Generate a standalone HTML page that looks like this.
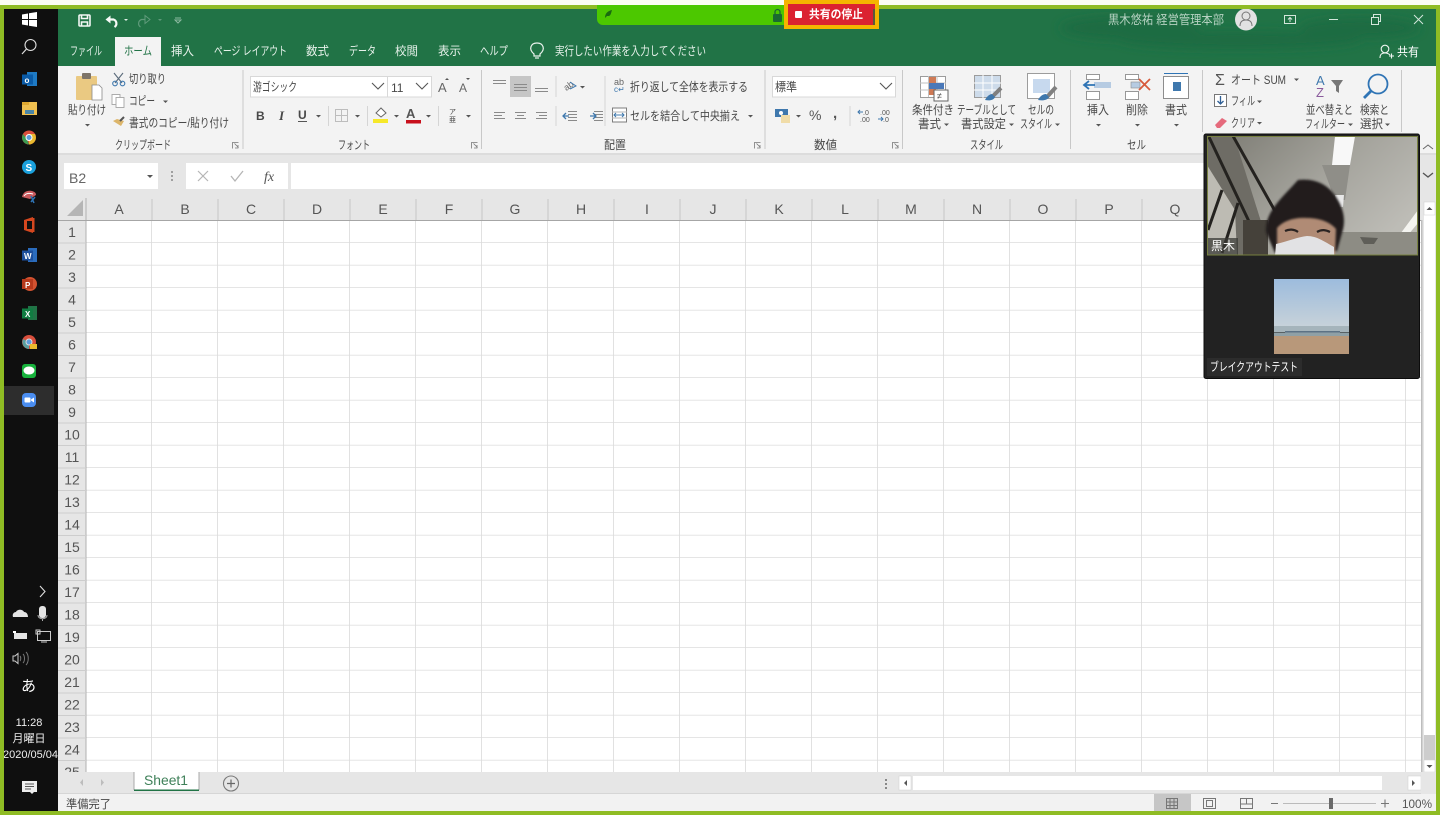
<!DOCTYPE html>
<html lang="ja">
<head>
<meta charset="utf-8">
<title>Excel</title>
<style>
html,body{margin:0;padding:0;width:1440px;height:815px;overflow:hidden;background:#fff}
svg{display:block;filter:blur(.3px)}
text{font-family:"Liberation Sans","Noto Sans CJK JP",sans-serif;fill:#484848;font-size:12px}
.tab{fill:#e6f1ea;font-size:12px}
.w{fill:#fff}
.h{font-size:14px;fill:#555;text-anchor:middle}
.g{font-size:12px;fill:#484848}
.ar{fill:#555}
</style>
</head>
<body>
<svg xmlns="http://www.w3.org/2000/svg" width="1440" height="815" viewBox="0 0 1440 815">
<defs>
<pattern id="grid" x="86" y="220.5" width="66" height="22.5" patternUnits="userSpaceOnUse">
<rect width="66" height="22.5" fill="#fff"/>
<rect x="65.2" width="1.1" height="22.5" fill="#dadada"/>
<rect y="21.8" width="66" height="1.1" fill="#dadada"/>
</pattern>
<filter id="bl" x="-20%" y="-50%" width="140%" height="200%"><feGaussianBlur stdDeviation="5"/></filter>
<filter id="bs" x="-20%" y="-20%" width="140%" height="140%"><feGaussianBlur stdDeviation="1"/></filter>
<linearGradient id="ceil" x1="0" y1="0" x2="1" y2=".6"><stop offset="0" stop-color="#7b7a72"/><stop offset=".55" stop-color="#a4a39c"/><stop offset="1" stop-color="#bdbcb6"/></linearGradient>
<linearGradient id="sky" x1="0" y1="0" x2="0" y2="1"><stop offset="0" stop-color="#9dbcdd"/><stop offset="1" stop-color="#cbd4d9"/></linearGradient>
<clipPath id="vid"><rect x="1207" y="136" width="211" height="119"/></clipPath>
</defs>

<!-- outer frame -->
<rect width="1440" height="815" fill="#8fbc24"/>
<rect width="1440" height="5" fill="#fbfdf3"/>
<rect x="4" y="9" width="54" height="802" fill="#0f0f0f"/>

<!-- title band -->
<rect x="58" y="9" width="1378" height="57" fill="#217346"/>
<g fill="#1f6c42" filter="url(#bl)">
<ellipse cx="1130" cy="28" rx="70" ry="12"/><ellipse cx="1240" cy="40" rx="120" ry="9"/><ellipse cx="1360" cy="28" rx="60" ry="10"/>
</g>

<!-- QAT -->
<g fill="none" stroke="#f2f7f4" stroke-width="1.600">
<rect x="79" y="15" width="11" height="11" rx="1"/>
<path d="M81.500 15v3.500h6V15M81.500 26v-4h6v4"/>
</g>
<path d="M105.500 19.500l5-4v8z" fill="#f6faf7"/>
<path d="M110 19.500h3.500a4.200 4.200 0 0 1 1 7.500" fill="none" stroke="#f6faf7" stroke-width="2.200"/>
<path d="M124 19h4l-2 2z" fill="#dfeee5"/>
<path d="M150 19.500l-5-4v8z" fill="none" stroke="#5f9a7a"/>
<path d="M145 19.500h-3.500a4.200 4.200 0 0 0-1 7.500" fill="none" stroke="#5f9a7a" stroke-width="1.200"/>
<path d="M158 19h4l-2 2z" fill="#5f9a7a"/>
<path d="M175 18h6M175 20l3 3 3-3z" fill="none" stroke="#8cb8a0"/>

<!-- tabs -->
<text class="tab" x="70" y="55" textLength="32" lengthAdjust="spacingAndGlyphs">ファイル</text>
<rect x="115" y="37" width="46" height="29" fill="#f3f3f3"/>
<text x="124" y="55" textLength="28" lengthAdjust="spacingAndGlyphs" style="fill:#217346">ホーム</text>
<text class="tab" x="171" y="55" textLength="23" lengthAdjust="spacingAndGlyphs">挿入</text>
<text class="tab" x="214" y="55" textLength="73" lengthAdjust="spacingAndGlyphs">ページ レイアウト</text>
<text class="tab" x="306" y="55" textLength="23" lengthAdjust="spacingAndGlyphs">数式</text>
<text class="tab" x="349" y="55" textLength="27" lengthAdjust="spacingAndGlyphs">データ</text>
<text class="tab" x="395" y="55" textLength="23" lengthAdjust="spacingAndGlyphs">校閲</text>
<text class="tab" x="438" y="55" textLength="23" lengthAdjust="spacingAndGlyphs">表示</text>
<text class="tab" x="480" y="55" textLength="28" lengthAdjust="spacingAndGlyphs">ヘルプ</text>
<g fill="none" stroke="#e8f2ec" stroke-width="1.200"><path d="M534 54c-6-5-3-11 3-11s9 6 3 11v2h-6z"/><path d="M535 58h4"/></g>
<text class="tab" x="555" y="55" textLength="151" lengthAdjust="spacingAndGlyphs">実行したい作業を入力してください</text>
<g fill="none" stroke="#f0f6f2" stroke-width="1.100"><circle cx="1385" cy="49" r="3.800"/><path d="M1380 58c0-4 2-5 5-5s4 1 5 2M1389 56h5M1391.500 53.500v5"/></g>
<text class="w" x="1397" y="56" textLength="22" lengthAdjust="spacingAndGlyphs">共有</text>

<!-- title right -->
<text x="1108" y="24" textLength="116" lengthAdjust="spacingAndGlyphs" style="fill:#b6d2c2;font-size:12.500px">黒木悠祐 経営管理本部</text>
<circle cx="1246" cy="19.500" r="11" fill="#e2e2e2"/>
<g fill="none" stroke="#777" stroke-width="1"><circle cx="1246" cy="16" r="4"/><path d="M1240 26c0-4 2-6 6-6s6 2 6 6"/></g>
<g fill="none" stroke="#d4e6db" stroke-width="1">
<rect x="1284.500" y="15.500" width="11" height="8"/><path d="M1290 22v-4M1288 19.500l2-2 2 2"/>
<path d="M1329 19.500h9"/>
<rect x="1371.500" y="17.500" width="7" height="7"/><path d="M1373.500 17v-2.500h7v7H1379"/>
<path d="M1414 15l9 9M1423 15l-9 9"/>
</g>

<!-- share bar -->
<path d="M597 5h188v20H603a6 6 0 0 1-6-6z" fill="#4cc800"/>
<path d="M605 18c0-5 3-7 7-8-1 3-1 5-3 6l-2 0z" fill="#1a6a10"/>
<rect x="773" y="14" width="9" height="8" rx="1" fill="#1a6a30"/>
<path d="M775 14v-2a2.500 2.500 0 0 1 5 0v2" fill="none" stroke="#1a6a30" stroke-width="1.300"/>
<rect x="784" y="0" width="95" height="29" fill="#f5b400"/>
<rect x="788" y="4" width="87" height="21" fill="#db2230"/>
<rect x="873" y="9" width="2" height="16" fill="#5b5b3a"/>
<rect x="795" y="11" width="7" height="7" rx="1" fill="#fff"/>
<text class="w" x="809" y="18" textLength="54" lengthAdjust="spacingAndGlyphs" style="font-weight:700;font-size:11.500px">共有の停止</text>

<!-- ribbon -->
<rect x="58" y="66" width="1378" height="87" fill="#f3f3f3"/>
<g fill="#c8c8c8">
<rect x="242.500" y="70" width="1" height="79"/><rect x="481" y="70" width="1" height="79"/><rect x="764.500" y="70" width="1" height="79"/><rect x="902" y="70" width="1" height="79"/><rect x="1070" y="70" width="1" height="79"/><rect x="1202" y="70" width="1" height="62"/><rect x="1401" y="70" width="1" height="62"/>
</g>

<!-- clipboard -->
<rect x="76" y="76" width="21" height="24" rx="1" fill="#eac982"/>
<rect x="82" y="73" width="9" height="6" rx="1" fill="#7d7468"/>
<path d="M92 85h7l3 3v12H92z" fill="#fff" stroke="#8a8a8a" stroke-width=".8"/>
<text x="68" y="114" textLength="38" lengthAdjust="spacingAndGlyphs">貼り付け</text>
<path d="M85 124h5l-2.500 2.500z" class="ar"/>
<g fill="none" stroke="#5b6b7b" stroke-width="1.100"><path d="M114 73l8 10M123 73l-8 10"/><circle cx="115" cy="83.500" r="2.300" stroke="#3f78ad"/><circle cx="122.500" cy="83.500" r="2.300" stroke="#3f78ad"/></g>
<text x="129" y="83" textLength="37" lengthAdjust="spacingAndGlyphs">切り取り</text>
<g fill="#fff" stroke="#a5a5a5" stroke-width=".9"><rect x="112" y="94.500" width="8" height="10"/><rect x="116" y="97.500" width="8" height="10"/></g>
<text x="129" y="105" textLength="26" lengthAdjust="spacingAndGlyphs">コピー</text>
<path d="M163 100.500h5l-2.500 2.500z" class="ar"/>
<path d="M113 121l8 5 3-5-7-2z" fill="#dcb56a"/><path d="M120 121l4-4" stroke="#555" stroke-width="2"/>
<text x="129" y="127" textLength="100" lengthAdjust="spacingAndGlyphs">書式のコピー/貼り付け</text>
<text class="g" x="115" y="149" textLength="56" lengthAdjust="spacingAndGlyphs">クリップボード</text>
<g fill="none" stroke="#777" stroke-width=".8"><path d="M232.500 148.500v-6h6M234.500 143.500l4 4M238 145v3h-3"/><path d="M471.500 148.500v-6h6M473.500 143.500l4 4M477 145v3h-3"/><path d="M754.500 148.500v-6h6M756.500 143.500l4 4M760 145v3h-3"/><path d="M892.500 148.500v-6h6M894.500 143.500l4 4M898 145v3h-3"/></g>

<!-- font -->
<rect x="250.500" y="76.500" width="137" height="20.500" fill="#fff" stroke="#d8d8d8"/>
<rect x="387.500" y="76.500" width="44" height="20.500" fill="#fff" stroke="#d8d8d8"/>
<text x="253" y="91" textLength="44" lengthAdjust="spacingAndGlyphs">游ゴシック</text>
<text x="391" y="92" style="font-size:12px">11</text>
<rect x="772.500" y="76.500" width="123" height="20.500" fill="#fff" stroke="#d8d8d8"/>
<g fill="none" stroke="#555" stroke-width="1.100"><path d="M372 83l6 6 6-6M416 83l6 6 6-6M880 83l6 6 6-6"/></g>
<text x="438" y="92" style="font-size:13px;fill:#666">A</text><text x="459" y="92" style="font-size:12px;fill:#666">A</text>
<path d="M445 80l2-2 2 2z" fill="#555"/><path d="M466 78h4l-2 2z" fill="#555"/>
<text x="256" y="120" style="font-weight:700;font-size:12px">B</text>
<text x="279" y="120" style="font-style:italic;font-weight:700;font-size:13px;font-family:'Liberation Serif',serif">I</text>
<text x="298" y="119" style="font-weight:700;font-size:12px">U</text><rect x="298" y="121" width="9" height="1" fill="#555"/>
<g class="ar"><path d="M316 115h5l-2.500 2.500zM355 115h5l-2.500 2.500zM394 115h5l-2.500 2.500zM426 115h5l-2.500 2.500zM466 115h5l-2.500 2.500zM580 86h5l-2.500 2.500zM748 115h5l-2.500 2.500zM796 115h5l-2.500 2.500z"/></g>
<rect x="328" y="106" width="1" height="20" fill="#d5d5d5"/><rect x="367" y="106" width="1" height="20" fill="#d5d5d5"/><rect x="438" y="106" width="1" height="20" fill="#d5d5d5"/>
<g fill="none" stroke="#bdbdbd"><rect x="335.500" y="109.500" width="12" height="12"/><path d="M341.500 109v13M335 115.500h13"/></g>
<path d="M376 113l5-5 5 5-5 4z" fill="#fff" stroke="#666"/><rect x="373" y="119" width="15" height="4" fill="#f6e829"/>
<text x="406" y="118" style="font-size:13px;font-weight:700;fill:#555">A</text><rect x="406" y="120" width="15" height="3.500" fill="#c8101c"/>
<text x="449" y="114" style="font-size:7px">ア</text><text x="449" y="122" style="font-size:7px">亜</text>
<text class="g" x="338" y="149" textLength="32" lengthAdjust="spacingAndGlyphs">フォント</text>

<!-- alignment -->
<rect x="510" y="76" width="21" height="21" fill="#c6c6c6"/>
<g stroke="#8a8a8a" stroke-width="1" fill="none">
<path d="M493 80.500h13M493 83.500h13M514 84.500h13M514 87.500h13M514 90.500h13M535 88.500h13M535 91.500h13"/>
<path d="M494 112.500h11M494 115.500h8M494 118.500h11M515 112.500h11M517 115.500h7M515 118.500h11M536 112.500h11M539 115.500h8M536 118.500h11"/>
<path d="M568 111.500h9M568 114.500h9M568 117.500h9M568 120.500h9M594 111.500h9M594 114.500h9M594 117.500h9M594 120.500h9"/>
</g>
<path d="M563 116h6M566 113l-3 3 3 3" fill="none" stroke="#3f78ad" stroke-width="1.300"/><path d="M590 116h6M593 113l3 3-3 3" fill="none" stroke="#3f78ad" stroke-width="1.300"/>
<text x="563" y="89" style="font-size:9px;fill:#666" transform="rotate(-35 568 85)">ab</text><path d="M570 82l6 4-6 3" fill="none" stroke="#3f78ad"/>
<rect x="555.500" y="76" width="1" height="21" fill="#d5d5d5"/><rect x="555.500" y="106" width="1" height="20" fill="#d5d5d5"/><rect x="604.500" y="76" width="1" height="50" fill="#d5d5d5"/>
<text x="614" y="85" style="font-size:9px;fill:#666">ab</text><text x="614" y="92" style="font-size:8px;fill:#3f78ad">c↵</text>
<text x="630" y="91" textLength="118" lengthAdjust="spacingAndGlyphs">折り返して全体を表示する</text>
<rect x="612.500" y="108" width="14" height="14" fill="#fff" stroke="#7d7d7d"/><path d="M612 112h15M612 118h15" stroke="#b5b5b5"/><path d="M614 115h10M616 113l-2 2 2 2M622 113l2 2-2 2" fill="none" stroke="#3f78ad"/>
<text x="630" y="120" textLength="110" lengthAdjust="spacingAndGlyphs">セルを結合して中央揃え</text>
<text class="g" x="604" y="149" textLength="22" lengthAdjust="spacingAndGlyphs">配置</text>

<!-- number -->
<text x="775" y="91" textLength="22" lengthAdjust="spacingAndGlyphs">標準</text>
<rect x="775" y="109" width="13" height="8" fill="#3f78ad"/><circle cx="781" cy="113" r="2" fill="#fff"/><rect x="781" y="115" width="9" height="8" fill="#f0dca8"/>
<text x="809" y="120" style="font-size:14px;fill:#555">%</text>
<text x="833" y="118" style="font-size:15px;font-weight:700;fill:#555">,</text>
<rect x="849.500" y="106" width="1" height="20" fill="#d5d5d5"/>
<text x="863" y="115" style="font-size:7px;fill:#555">.0</text><text x="860" y="122" style="font-size:7px;fill:#555">.00</text>
<text x="880" y="115" style="font-size:7px;fill:#555">.00</text><text x="883" y="122" style="font-size:7px;fill:#555">.0</text>
<path d="M858 112h5M860 110l-2 2 2 2M878 119h5M881 117l2 2-2 2" fill="none" stroke="#3f78ad"/>
<text class="g" x="814" y="149" textLength="23" lengthAdjust="spacingAndGlyphs">数値</text>

<!-- styles -->
<g>
<rect x="920.500" y="76.500" width="25" height="21" fill="#fff" stroke="#9c9c9c"/>
<path d="M920 83h26M920 90h26M928.500 76v21M937 76v21" stroke="#c2c2c2"/>
<rect x="929" y="77" width="7" height="6" fill="#cf7a55"/><rect x="929" y="83" width="15" height="6" fill="#4a78b8"/><rect x="929" y="89" width="7" height="6" fill="#cf7a55"/>
<rect x="934" y="90" width="14" height="11" fill="#fff" stroke="#666"/><text x="937" y="99" style="font-size:9px">≠</text>
<text x="912" y="114" textLength="42" lengthAdjust="spacingAndGlyphs">条件付き</text>
<text x="918" y="128" textLength="23" lengthAdjust="spacingAndGlyphs">書式</text><path d="M944 123.500h5l-2.500 2.500z" class="ar"/>

<rect x="974.500" y="75.500" width="26" height="22" fill="#cddbea" stroke="#9c9c9c"/>
<path d="M974 83h27M974 90h27M983 75v23M992 75v23" stroke="#fff"/>
<path d="M1001 88l-9 9" stroke="#808080" stroke-width="4"/><path d="M985 100c2-4 5-6 7-6l3 3c-1 3-5 4-10 3z" fill="#3f78ad"/>
<text x="957" y="114" textLength="59" lengthAdjust="spacingAndGlyphs">テーブルとして</text>
<text x="961" y="128" textLength="45" lengthAdjust="spacingAndGlyphs">書式設定</text><path d="M1009 123.500h5l-2.500 2.500z" class="ar"/>

<rect x="1027.500" y="73.500" width="27" height="25" fill="#fff" stroke="#9c9c9c"/>
<rect x="1033" y="79" width="17" height="14" fill="#c7d9ee"/>
<path d="M1056 87l-9 10" stroke="#808080" stroke-width="4"/><path d="M1038 100c2-4 5-6 8-6l3 3c-1 3-6 4-11 3z" fill="#3f78ad"/>
<text x="1028" y="114" textLength="26" lengthAdjust="spacingAndGlyphs">セルの</text>
<text x="1020" y="128" textLength="32" lengthAdjust="spacingAndGlyphs">スタイル</text><path d="M1055 123.500h5l-2.500 2.500z" class="ar"/>
<text class="g" x="970" y="149" textLength="33" lengthAdjust="spacingAndGlyphs">スタイル</text>
</g>

<!-- cells -->
<g fill="#fff" stroke="#8d8d8d" stroke-width=".9">
<rect x="1086.500" y="74.500" width="13" height="5"/><rect x="1086.500" y="91.500" width="13" height="8"/>
<rect x="1125.500" y="74.500" width="13" height="5"/><rect x="1125.500" y="91.500" width="13" height="8"/>
</g>
<rect x="1094" y="82" width="17" height="6" fill="#b6cbe2"/><path d="M1084 85h11M1089 81l-5 4 5 4" fill="none" stroke="#2f74b5" stroke-width="1.800"/>
<rect x="1131" y="82" width="9" height="6" fill="#b6cbe2" stroke="#8d8d8d" stroke-width=".6"/><path d="M1139 79l11 11M1150 79l-11 11" stroke="#d75a3c" stroke-width="1.800"/>
<rect x="1163.500" y="76.500" width="25" height="22" fill="#fff" stroke="#8d8d8d"/><rect x="1173" y="82" width="8" height="9" fill="#3f78ad"/><path d="M1164 73.500h24" stroke="#2f74b5"/>
<text x="1087" y="114" textLength="22" lengthAdjust="spacingAndGlyphs">挿入</text><path d="M1096 124h5l-2.500 2.500z" class="ar"/>
<text x="1126" y="114" textLength="22" lengthAdjust="spacingAndGlyphs">削除</text><path d="M1135 124h5l-2.500 2.500z" class="ar"/>
<text x="1165" y="114" textLength="22" lengthAdjust="spacingAndGlyphs">書式</text><path d="M1174 124h5l-2.500 2.500z" class="ar"/>
<text class="g" x="1127" y="149" textLength="19" lengthAdjust="spacingAndGlyphs">セル</text>

<!-- editing -->
<text x="1215" y="85" style="font-size:16px;fill:#555">Σ</text>
<text x="1231" y="84" textLength="55" lengthAdjust="spacingAndGlyphs">オート SUM</text>
<path d="M1294 78.500h5l-2.500 2.500zM1257 100.500h5l-2.500 2.500zM1257 122h5l-2.500 2.500zM1348 123.500h5l-2.500 2.500zM1385 123.500h5l-2.500 2.500z" class="ar"/>
<rect x="1214.500" y="94.500" width="12" height="12" fill="#fff" stroke="#777"/><path d="M1220.500 96v8M1217.500 101l3 3 3-3" fill="none" stroke="#2f5f95" stroke-width="1.300"/>
<text x="1231" y="105" textLength="24" lengthAdjust="spacingAndGlyphs">フィル</text>
<path d="M1215 125l7-7 5 3-7 7h-3z" fill="#e56a7c"/>
<text x="1231" y="127" textLength="24" lengthAdjust="spacingAndGlyphs">クリア</text>
<text x="1316" y="85" style="font-size:13px;fill:#3f78ad">A</text><text x="1316" y="97" style="font-size:13px;fill:#8a5a9c">Z</text>
<path d="M1331 80h12l-4 6v7l-3-2v-5z" fill="#777"/>
<circle cx="1378" cy="84" r="9.500" fill="none" stroke="#2f74b5" stroke-width="1.800"/><path d="M1371 91l-7 7" stroke="#2f74b5" stroke-width="2.800"/>
<text x="1306" y="114" textLength="47" lengthAdjust="spacingAndGlyphs">並べ替えと</text>
<text x="1305" y="128" textLength="40" lengthAdjust="spacingAndGlyphs">フィルター</text>
<text x="1360" y="114" textLength="29" lengthAdjust="spacingAndGlyphs">検索と</text>
<text x="1360" y="128" textLength="23" lengthAdjust="spacingAndGlyphs">選択</text>
<path d="M1423 149l5-4 5 4" fill="none" stroke="#666"/>

<!-- formula band -->
<rect x="58" y="153" width="1378" height="45" fill="#e6e6e6"/>
<rect x="58" y="153" width="1378" height="2" fill="#dcdcdc"/>
<rect x="64" y="163" width="94" height="26" fill="#fff"/>
<text x="69" y="183" style="font-size:14px;fill:#666">B2</text>
<path d="M147 175h6l-3 3z" class="ar"/>
<g fill="#a0a0a0"><rect x="171" y="171" width="2" height="2"/><rect x="171" y="175" width="2" height="2"/><rect x="171" y="179" width="2" height="2"/></g>
<rect x="186" y="163" width="102" height="26" fill="#fff"/>
<path d="M198 171l10 10M208 171l-10 10" stroke="#b5b5b5" stroke-width="1.200"/>
<path d="M231 176l4 5 8-10" fill="none" stroke="#b5b5b5" stroke-width="1.300"/>
<text x="264" y="181" style="font-family:'Liberation Serif',serif;font-style:italic;font-size:14px;fill:#555">fx</text>
<rect x="291" y="163" width="1129" height="26" fill="#fff"/>
<path d="M1423 173l5 4 5-4" fill="none" stroke="#555" stroke-width="1.400"/>

<!-- grid -->
<rect x="86" y="220" width="1335" height="552" fill="url(#grid)"/>
<rect x="1421" y="198" width="15" height="596" fill="#e6e6e6"/>
<rect x="58" y="198" width="28" height="574" fill="#e6e6e6"/>
<rect x="86" y="198" width="1335" height="22" fill="#e6e6e6"/>
<path d="M67 216h16v-16z" fill="#b5b5b5"/>
<rect x="85.500" y="198" width="1" height="574" fill="#b0b0b0"/>
<rect x="58" y="220" width="1363" height="1" fill="#a6a6a6"/>
<path d="M152 199v21M218 199v21M284 199v21M350 199v21M416 199v21M482 199v21M548 199v21M614 199v21M680 199v21M746 199v21M812 199v21M878 199v21M944 199v21M1010 199v21M1076 199v21M1142 199v21M1208 199v21M1274 199v21M1340 199v21M1406 199v21" stroke="#c6c6c6"/>
<path d="M58 243h28M58 265.500h28M58 288h28M58 310.500h28M58 333h28M58 355.500h28M58 378h28M58 400.500h28M58 423h28M58 445.500h28M58 468h28M58 490.500h28M58 513h28M58 535.500h28M58 558h28M58 580.500h28M58 603h28M58 625.500h28M58 648h28M58 670.500h28M58 693h28M58 715.500h28M58 738h28M58 760.500h28" stroke="#cdcdcd"/>
<g>
<text class="h" x="119" y="214">A</text><text class="h" x="185" y="214">B</text><text class="h" x="251" y="214">C</text><text class="h" x="317" y="214">D</text><text class="h" x="383" y="214">E</text><text class="h" x="449" y="214">F</text><text class="h" x="515" y="214">G</text><text class="h" x="581" y="214">H</text><text class="h" x="647" y="214">I</text><text class="h" x="713" y="214">J</text><text class="h" x="779" y="214">K</text><text class="h" x="845" y="214">L</text><text class="h" x="911" y="214">M</text><text class="h" x="977" y="214">N</text><text class="h" x="1043" y="214">O</text><text class="h" x="1109" y="214">P</text><text class="h" x="1175" y="214">Q</text>
</g>
<g>
<text class="h" x="72" y="237">1</text><text class="h" x="72" y="259.500">2</text><text class="h" x="72" y="282">3</text><text class="h" x="72" y="304.500">4</text><text class="h" x="72" y="327">5</text><text class="h" x="72" y="349.500">6</text><text class="h" x="72" y="372">7</text><text class="h" x="72" y="394.500">8</text><text class="h" x="72" y="417">9</text><text class="h" x="72" y="439.500">10</text><text class="h" x="72" y="462">11</text><text class="h" x="72" y="484.500">12</text><text class="h" x="72" y="507">13</text><text class="h" x="72" y="529.500">14</text><text class="h" x="72" y="552">15</text><text class="h" x="72" y="574.500">16</text><text class="h" x="72" y="597">17</text><text class="h" x="72" y="619.500">18</text><text class="h" x="72" y="642">19</text><text class="h" x="72" y="664.500">20</text><text class="h" x="72" y="687">21</text><text class="h" x="72" y="709.500">22</text><text class="h" x="72" y="732">23</text><text class="h" x="72" y="754.500">24</text><text class="h" x="72" y="777">25</text>
</g>

<!-- vertical scrollbar -->
<rect x="1421" y="220" width="1.500" height="552" fill="#bdbdbd"/>
<rect x="1424" y="215" width="11" height="520" fill="#fff"/>
<rect x="1424" y="735" width="11" height="25" fill="#cdcdcd"/>
<rect x="1424" y="202" width="11" height="13" fill="#fff" stroke="#d0d0d0" stroke-width=".5"/>
<rect x="1424" y="760" width="11" height="12" fill="#fff" stroke="#d0d0d0" stroke-width=".5"/>
<path d="M1426.500 210l3-3 3 3zM1426.500 765h6l-3 3z" fill="#555"/>

<!-- sheet tabs bar -->
<rect x="58" y="772" width="1378" height="22" fill="#e6e6e6"/>
<rect x="58" y="793.500" width="1378" height="1" fill="#c6c6c6"/>
<path d="M83 779v7l-3-3.500zM101 779v7l3-3.500z" fill="#bdbdbd"/>
<rect x="134" y="772" width="65" height="18" fill="#fff"/>
<path d="M134 772v18M199 772v18" stroke="#a8a8a8"/>
<rect x="134" y="789.500" width="65" height="1.500" fill="#217346"/>
<text x="144" y="785" textLength="44" lengthAdjust="spacingAndGlyphs" style="font-size:14px;fill:#3f8059">Sheet1</text>
<circle cx="231" cy="783.500" r="7.500" fill="none" stroke="#7a7a7a" stroke-width="1.100"/><path d="M227 783.500h8M231 779.500v8" stroke="#666" stroke-width="1.200"/>
<g fill="#888"><rect x="885" y="779" width="2" height="2"/><rect x="885" y="783" width="2" height="2"/><rect x="885" y="787" width="2" height="2"/></g>
<rect x="899" y="776" width="12" height="14" fill="#fff" stroke="#d0d0d0" stroke-width=".5"/>
<rect x="913" y="776" width="469" height="14" fill="#fff"/>
<rect x="1408" y="776" width="13" height="14" fill="#fff" stroke="#d0d0d0" stroke-width=".5"/>
<path d="M907 780v6l-3-3zM1412 780v6l3-3z" fill="#555"/>
<rect x="1421" y="772" width="15" height="22" fill="#e6e6e6"/>

<!-- status -->
<rect x="58" y="794" width="1378" height="17" fill="#f2f2f2"/>
<text x="66" y="808" textLength="45" lengthAdjust="spacingAndGlyphs" style="font-size:11.500px">準備完了</text>
<rect x="1154" y="794" width="37" height="17" fill="#c6c6c6"/>
<g fill="none" stroke="#777"><rect x="1166.500" y="798.500" width="11" height="10"/><path d="M1170 798v11M1174 798v11M1166 802h12M1166 805.500h12"/>
<rect x="1203.500" y="798.500" width="12" height="10"/><rect x="1206.500" y="800.500" width="6" height="6"/>
<path d="M1240.500 808.500v-10h12v10zM1246.500 798v6h-6M1246.500 804h6"/>
<path d="M1271 803.500h7M1381 803.500h8M1385 799.500v8" stroke-width="1.100"/></g>
<rect x="1283" y="803" width="93" height="1" fill="#bbb"/>
<rect x="1329" y="798" width="4" height="11" fill="#6a6a6a"/>
<text x="1402" y="808" textLength="30" lengthAdjust="spacingAndGlyphs" style="font-size:12px;fill:#555">100%</text>

<!-- taskbar -->
<rect x="4" y="386" width="50" height="29" fill="#2d2d2d"/>
<path d="M22 14.500l6-1v5.500h-6zM29 13.300l8-1.300v7h-8zM22 20h6v5.500l-6-1zM29 20h8v7l-8-1.300z" fill="#fff"/>
<circle cx="30.500" cy="45" r="5.500" fill="none" stroke="#ddd" stroke-width="1.100"/><path d="M26.500 49l-4.500 5" stroke="#ddd" stroke-width="1.200"/>
<rect x="27" y="72" width="10" height="14" fill="#1e7ac4"/><rect x="22" y="74.500" width="11" height="10" fill="#0a5ba8"/><text x="24.500" y="83" class="w" style="font-size:8px;font-weight:700">o</text>
<rect x="22" y="102" width="15" height="13" fill="#f0c050"/><rect x="22" y="102" width="7" height="3" fill="#e0a830"/><rect x="25" y="110" width="9" height="4" fill="#4a86a8"/>
<circle cx="29" cy="137.500" r="7" fill="#d94f3d"/><path d="M29 144.500a7 7 0 0 0 6-10.500h-6z" fill="#e8b92e"/><path d="M29 144.500a7 7 0 0 1-6-10.500l4 5z" fill="#3c9c52"/><circle cx="29" cy="137.500" r="3" fill="#5f9ddb" stroke="#fff"/>
<circle cx="29" cy="167" r="7" fill="#1aa0dc"/><text x="25.500" y="171" class="w" style="font-size:10px;font-weight:700">S</text>
<path d="M22 197c1-5 5-7 10-6 3 1 4 2 4 4l-6 4z" fill="#c85a5e"/><path d="M24 196c2-3 5-3 9-2" stroke="#fff" fill="none"/><path d="M31 196l3 7M35 197l-4 5" stroke="#2f74b5" stroke-width="1.500"/>
<path d="M24 220l9-3v16l-9-3z" fill="#d5471f"/><rect x="27" y="221" width="6" height="8" fill="#0f0f0f"/><rect x="32" y="218" width="2.500" height="14" fill="#d5471f"/>
<rect x="28" y="248" width="9" height="14" fill="#2b6cbd"/><rect x="22" y="250.500" width="11" height="10" fill="#1d4f9c"/><text x="24" y="259" class="w" style="font-size:8px;font-weight:700">W</text>
<circle cx="30" cy="284" r="7" fill="#d35230"/><rect x="22" y="279" width="11" height="10" fill="#b7391c"/><text x="25" y="288" class="w" style="font-size:8px;font-weight:700">P</text>
<rect x="28" y="306" width="9" height="14" fill="#217346"/><rect x="22" y="308.500" width="11" height="10" fill="#107c41"/><text x="25" y="317" class="w" style="font-size:8px;font-weight:700">X</text>
<circle cx="29" cy="342" r="7" fill="#d94f3d"/><path d="M29 349a7 7 0 0 1-6-10l6 3z" fill="#5a9fa0"/><circle cx="29" cy="342" r="3" fill="#5f9ddb" stroke="#ddd"/><rect x="30" y="344" width="7" height="5" fill="#e8b92e"/>
<rect x="22" y="364" width="14" height="14" rx="3" fill="#17b23c"/><ellipse cx="29" cy="370.500" rx="5.500" ry="4" fill="#fff"/>
<rect x="22" y="393" width="14" height="14" rx="4" fill="#4a8df0"/><rect x="24.500" y="397.500" width="6" height="5" rx="1" fill="#fff"/><path d="M31 399.500l3-2v5l-3-2z" fill="#fff"/>

<path d="M40 586l5 5.500-5 5.500" fill="none" stroke="#ddd" stroke-width="1.100"/>
<path d="M13 617c-1-3 1-5 3-5 1-3 7-3 8 0 3 0 4 3 4 5z" fill="#e4e4e4"/>
<rect x="39" y="606" width="7" height="12" rx="3" fill="#e4e4e4"/><path d="M38 615c0 5 9 5 9 0M42.500 619v2" fill="none" stroke="#aaa"/>
<rect x="14" y="633" width="13" height="6" fill="#e4e4e4"/><rect x="13" y="631" width="3" height="2" fill="#fff"/>
<rect x="37.500" y="631.500" width="13" height="9" fill="none" stroke="#ccc"/><path d="M36 630h4v4h-4zM41 642h6" fill="none" stroke="#ccc"/>
<path d="M13 656h2l3-2.500v10l-3-2.500h-2z" fill="none" stroke="#ccc"/><path d="M20 656c1 1 1 4 0 5M23 654c2 2 2 7 0 9M26 652c3 3 3 10 0 13" fill="none" stroke="#777"/>
<text x="28.500" y="691" class="w" text-anchor="middle" style="font-size:15px">あ</text>
<text x="29" y="726" text-anchor="middle" style="font-size:11px;fill:#eee">11:28</text>
<text x="29" y="742" text-anchor="middle" style="font-size:11px;fill:#eee">月曜日</text>
<text x="3" y="758" textLength="55" lengthAdjust="spacingAndGlyphs" style="font-size:11px;fill:#eee">2020/05/04</text>
<path d="M22 781h15v11h-3l-2 2-2-2H22z" fill="#eee"/><path d="M25 784h9M25 786.500h9M25 789h6" stroke="#555"/>

<!-- zoom panel -->
<rect x="1204" y="134" width="215.500" height="244.500" rx="2" fill="#222" stroke="#0c0c0c" stroke-width="1"/>
<g clip-path="url(#vid)">
<rect x="1207" y="136" width="211" height="119" fill="url(#ceil)"/>
<path d="M1207 136h27l30 95v24h-57z" fill="#6e6c65"/>
<path d="M1207 165l28 45 2 45h-30z" fill="#bdbbb3"/>
<path d="M1209 137l45 95M1233 136l42 75M1222 190l-14 40M1238 203l-16 50" stroke="#24221f" stroke-width="3" fill="none"/>
<path d="M1335 136.500h20l-5 28.500h-18z" fill="#f8f8f8"/>
<path d="M1322 165h28l-5 35h-10z" fill="#8f8e88"/>
<path d="M1335 195h9l-1 12h-7z" fill="#e8e8e8"/>
<path d="M1418 210v13l-20 24-6-2z" fill="#f4f4f0"/>
<rect x="1243" y="220" width="25" height="35" fill="#45413a"/>
<rect x="1335" y="232" width="83" height="23" fill="#8d8c84"/>
<path d="M1360 237l18 1-4 6h-10z" fill="#5f5e58"/>
<path d="M1266 232c-1-20 14-32 32-52 16-2 30 4 38 17 8 12 10 24 6 36l-5 18-62 2z" fill="#211e1f" filter="url(#bs)"/>
<path d="M1277 255v-27c6-7 17-11 30-10 14 0 24 5 29 11l-1 26z" fill="#b08b74" filter="url(#bs)"/>
<path d="M1285 231c4-2 9-2 13 1M1317 232c5-3 9-2 13 0" stroke="#2b2422" stroke-width="2.200" fill="none"/>
<path d="M1276 244c13-3 22-7 31-8 10 0 18 6 27 11v9h-59z" fill="#e2e2e4"/>
</g>
<rect x="1207.500" y="136.500" width="210" height="118.500" fill="none" stroke="#77803f" stroke-width="1"/>
<rect x="1208" y="238" width="30" height="16.500" fill="#3a3a36" opacity=".75"/>
<text x="1211" y="250" class="w" textLength="24" lengthAdjust="spacingAndGlyphs">黒木</text>

<rect x="1274" y="279" width="75" height="52" fill="url(#sky)"/>
<rect x="1274" y="326" width="75" height="6" fill="#a5b4bb"/>
<rect x="1285" y="331" width="55" height="1.500" fill="#5c7285"/>
<rect x="1274" y="332.500" width="75" height="4" fill="#8fa0a6"/>
<rect x="1274" y="336" width="75" height="18" fill="#b8987a"/>
<rect x="1207" y="358" width="95" height="18" fill="#2c2c2c"/>
<text x="1210" y="371" class="w" textLength="88" lengthAdjust="spacingAndGlyphs">ブレイクアウトテスト</text>

<!-- frame overlays -->
<rect x="1436" y="9" width="4" height="806" fill="#8fbc24"/>
<rect y="811" width="1440" height="4" fill="#8fbc24"/>
<rect y="5" width="4" height="810" fill="#8fbc24"/>
<rect x="4" y="5" width="593" height="4" fill="#8fbc24"/>
<rect x="879" y="5" width="557" height="4" fill="#8fbc24"/>
</svg>
</body>
</html>
